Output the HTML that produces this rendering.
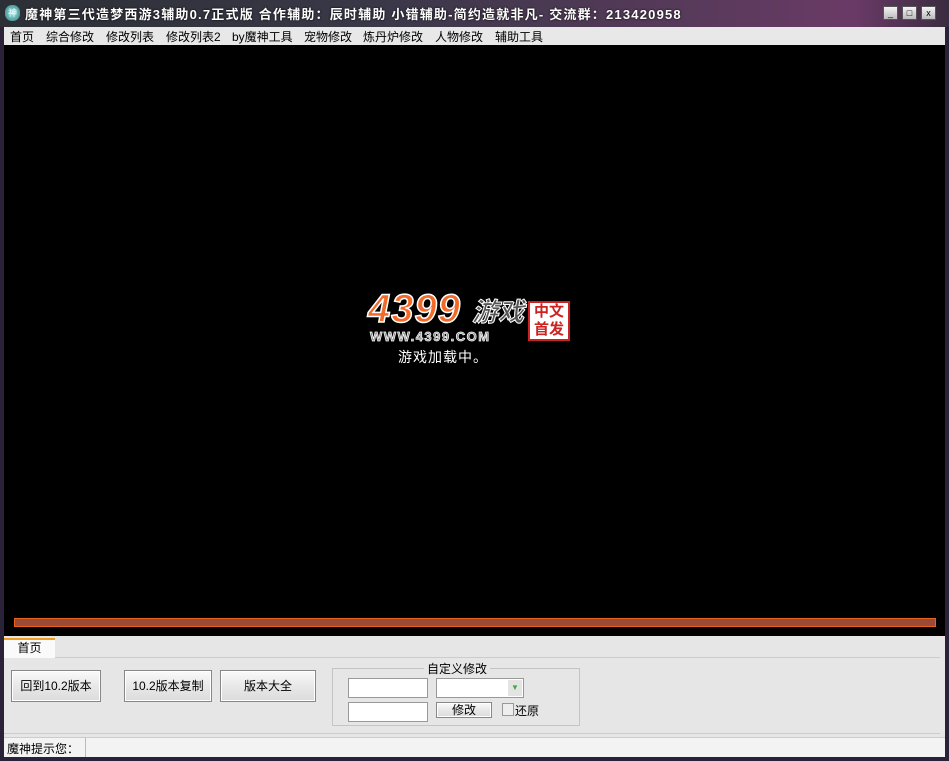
<!DOCTYPE html>
<html><head><meta charset="utf-8"><style>
*{margin:0;padding:0;box-sizing:border-box}
body{width:949px;height:761px;overflow:hidden;background:#2a2238;font-family:"Liberation Sans","Noto Sans CJK SC",sans-serif;font-size:12px;position:relative}
.abs{position:absolute}
#title{left:0;top:0;width:949px;height:27px;background:linear-gradient(90deg,#2c3036 0%,#3a3848 40%,#5a3a5c 75%,#6a3a66 90%,#3a2c40 100%)}
#title .t{left:25px;top:4px;color:#fff;font-weight:bold;font-size:13px;white-space:nowrap;letter-spacing:1.2px;text-shadow:0 0 2px #000}
.wb{top:6px;width:15px;height:14px;background:linear-gradient(#f4f4f4,#bbb);border:1px solid #555;font-size:9px;text-align:center;line-height:12px;color:#000}
#menu{left:4px;top:27px;width:941px;height:18px;background:#e8e8e8}
#menu span{position:absolute;top:1px;font-size:12px;color:#000;white-space:nowrap}
#game{left:4px;top:45px;width:941px;height:591px;background:#000}
#bar{left:14px;top:618px;width:922px;height:9px;background:#9c4a38;border:1px solid #e8621c}
#panel{left:4px;top:636px;width:941px;height:101px;background:#e6e6e6}
#tab{left:4px;top:638px;width:51px;height:20px;background:#fafafa;border-top:2px solid #f0a020;text-align:center;font-size:12px;line-height:17px}
#box{left:4px;top:657px;width:936px;height:77px;border-top:1px solid #ccc;border-bottom:1px solid #ccc}
.btn{height:32px;top:670px;border:1px solid #888;background:linear-gradient(#fafafa,#e8e8e8 50%,#dcdcdc);box-shadow:inset 0 0 0 1px #fff;text-align:center;line-height:30px;font-size:12px}
.inp{background:#fff;border:1px solid #999;height:20px}
#status{left:4px;top:737px;width:941px;height:20px;background:#f3f3f3;border-top:1px solid #ccc}
</style></head><body>
<div id="title" class="abs">
<div class="abs" style="left:5px;top:5px;width:15px;height:16px;border-radius:7px;background:radial-gradient(#9ee,#377);color:#fff;font-size:9px;text-align:center;line-height:16px">神</div>
<div class="abs t">魔神第三代造梦西游3辅助0.7正式版 合作辅助：辰时辅助 小错辅助-简约造就非凡- 交流群：213420958</div>
<div class="abs wb" style="left:883px">_</div>
<div class="abs wb" style="left:902px">□</div>
<div class="abs wb" style="left:921px">x</div>
</div>
<div id="menu" class="abs">
<span style="left:6px">首页</span><span style="left:42px">综合修改</span><span style="left:102px">修改列表</span><span style="left:162px">修改列表2</span><span style="left:228px">by魔神工具</span><span style="left:300px">宠物修改</span><span style="left:359px">炼丹炉修改</span><span style="left:431px">人物修改</span><span style="left:491px">辅助工具</span>
</div>
<div id="game" class="abs">
<div class="abs" style="left:364px;top:244px;font-size:40px;line-height:40px;font-weight:900;font-style:italic;color:#f26a2a;-webkit-text-stroke:1.5px #fff;letter-spacing:1px">4399</div>
<div class="abs" style="left:468px;top:253px;font-size:26px;line-height:28px;font-weight:bold;font-style:italic;color:#555;-webkit-text-stroke:1px #fff">游戏</div>
<div class="abs" style="left:524px;top:256px;width:42px;height:40px;border:2px solid #c22;background:#fff;color:#c22;font-size:15px;line-height:18px;text-align:center;font-weight:bold">中文<br>首发</div>
<div class="abs" style="left:366px;top:284px;font-size:13px;font-weight:900;color:#888;-webkit-text-stroke:0.7px #fff;letter-spacing:1.5px">WWW.4399.COM</div>
<div class="abs" style="left:394px;top:302px;font-size:14px;color:#fff;letter-spacing:1px">游戏加载中。</div>
</div>
<div id="bar" class="abs"></div>
<div id="panel" class="abs"></div>
<div id="box" class="abs"></div>
<div id="tab" class="abs">首页</div>
<div class="abs btn" style="left:11px;width:90px">回到10.2版本</div>
<div class="abs btn" style="left:124px;width:88px">10.2版本复制</div>
<div class="abs btn" style="left:220px;width:96px">版本大全</div>
<div class="abs" style="left:332px;top:668px;width:248px;height:58px;border:1px solid #c4c4c4"></div>
<div class="abs" style="left:424px;top:660px;background:#e6e6e6;padding:0 3px">自定义修改</div>
<div class="abs inp" style="left:348px;top:678px;width:80px"></div>
<div class="abs inp" style="left:348px;top:702px;width:80px"></div>
<div class="abs inp" style="left:436px;top:678px;width:88px"><div class="abs" style="right:1px;top:1px;width:14px;height:16px;background:#e4e4e4;color:#4a4;font-size:8px;text-align:center;line-height:16px">▼</div></div>
<div class="abs btn" style="left:436px;top:702px;width:56px;height:16px;line-height:14px">修改</div>
<div class="abs" style="left:502px;top:703px;width:12px;height:13px;border:1px solid #999;background:#eee"></div>
<div class="abs" style="left:515px;top:702px">还原</div>
<div id="status" class="abs"><div class="abs" style="left:3px;top:2px">魔神提示您：</div><div class="abs" style="left:81px;top:0;width:1px;height:19px;background:#bbb"></div></div>
</body></html>
